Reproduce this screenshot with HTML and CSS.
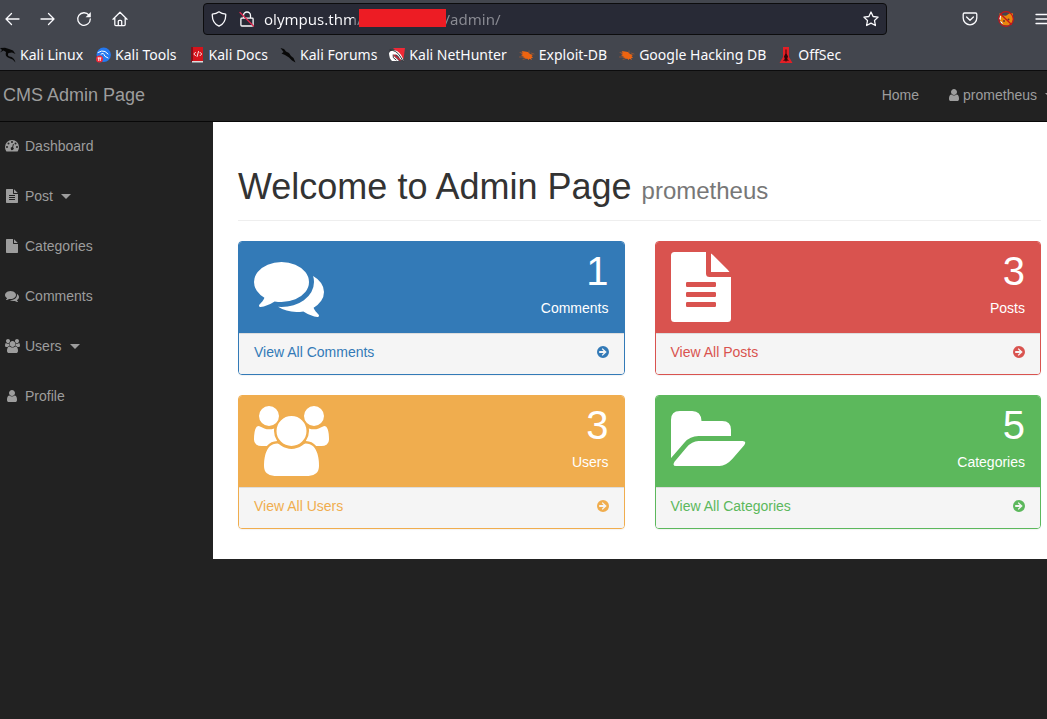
FILE: index.html
```html
<!DOCTYPE html>
<html lang="en">
<head>
<meta charset="utf-8">
<title>CMS Admin Page</title>
<meta name="viewport" content="width=device-width, initial-scale=1">
<link rel="stylesheet" href="styles.css">
</head>
<body>
<svg class="sprite" aria-hidden="true">
  <symbol id="i-comments" viewBox="0 0 1792 1792"><path d="M1408 768q0 139-94 257t-256.500 186.500-353.500 68.500q-86 0-176-16-124 88-278 128-36 9-86 16h-3q-11 0-20.500-8t-11.500-21q-1-3-1-6.500t.5-6.500 2-6l2.500-5 3.500-5.500 4-5 4.500-5 4-4.500q5-6 23-25t26-29.500 22.500-29 25-38.500 20.500-44q-124-72-195-177t-71-224q0-139 94-257t256.500-186.500 353.500-68.500 353.500 68.500 256.500 186.500 94 257zm384 256q0 120-71 224.500t-195 176.500q10 24 20.500 44t25 38.500 22.500 29 26 29.500 23 25q1 1 4 4.500t4.500 5 4 5 3.500 5.500l2.500 5 2 6 .5 6.500-1 6.500q-3 14-13 22t-22 7q-50-7-86-16-154-40-278-128-90 16-176 16-271 0-472-132 58 4 88 4 161 0 309-45t264-129q125-92 192-212t67-254q0-77-23-152 129 71 204 178t75 230z"/></symbol>
  <symbol id="i-users" viewBox="-64 0 1920 1792"><path d="M529 896q-162 5-265 128h-134q-82 0-138-40.500t-56-118.500q0-353 124-353 6 0 43.500 21t97.500 42.500 119 21.500q67 0 133-23-5 37-5 66 0 139 81 256zm1071 637q0 120-73 189.500t-194 69.500h-874q-121 0-194-69.500t-73-189.500q0-53 3.500-103.500t14-109 26.500-108.500 43-97.500 62-81 85.500-53.500 111.500-20q10 0 43 21.500t73 48 107 48 135 21.500 135-21.500 107-48 73-48 43-21.500q61 0 111.500 20t85.500 53.500 62 81 43 97.500 26.500 108.500 14 109 3.500 103.500zm-1024-1277q0 106-75 181t-181 75-181-75-75-181 75-181 181-75 181 75 75 181zm704 384q0 159-112.500 271.500t-271.500 112.500-271.500-112.500-112.500-271.500 112.500-271.500 271.500-112.500 271.500 112.500 112.500 271.500zm576 225q0 78-56 118.500t-138 40.500h-134q-103-123-265-128 81-117 81-256 0-29-5-66 66 23 133 23 59 0 119-21.500t97.500-42.500 43.500-21q124 0 124 353zm-128-609q0 106-75 181t-181 75-181-75-75-181 75-181 181-75 181 75 75 181z"/></symbol>
  <symbol id="i-user" viewBox="0 0 1280 1792"><path d="M1280 1399q0 109-62.500 187t-150.500 78h-854q-88 0-150.500-78t-62.500-187q0-85 8.500-160.500t31.500-152 58.500-131 94-89 134.500-34.500q131 128 313 128t313-128q76 0 134.500 34.500t94 89 58.500 131 31.500 152 8.500 160.500zm-256-887q0 159-112.500 271.500t-271.500 112.500-271.500-112.500-112.500-271.500 112.500-271.500 271.500-112.500 271.500 112.500 112.500 271.500z"/></symbol>
  <symbol id="i-file" viewBox="0 0 60 70"><path d="M3.500 0H35V21.500Q35 25 38.500 25H60V66.500Q60 70 56.500 70H3.500Q0 70 0 66.500V3.500Q0 0 3.500 0ZM40 1.500Q41.500 2.500 42.500 3.500L56.500 17.500Q58 19 58.500 20H40Z"/></symbol>
  <symbol id="i-file-text" viewBox="0 0 60 70"><path fill-rule="evenodd" d="M3.500 0H35V21.500Q35 25 38.500 25H60V66.500Q60 70 56.500 70H3.500Q0 70 0 66.500V3.500Q0 0 3.500 0ZM40 1.500Q41.500 2.500 42.500 3.500L56.500 17.500Q58 19 58.500 20H40ZM16.200 30H43.800Q45 30 45 31.200V33.800Q45 35 43.800 35H16.200Q15 35 15 33.800V31.200Q15 30 16.200 30ZM16.200 40H43.800Q45 40 45 41.200V43.800Q45 45 43.800 45H16.200Q15 45 15 43.800V41.200Q15 40 16.200 40ZM16.200 50H43.800Q45 50 45 51.200V53.800Q45 55 43.800 55H16.200Q15 55 15 53.800V51.200Q15 50 16.200 50Z"/></symbol>
  <symbol id="i-folder" viewBox="0 0 75 70"><path d="M0 52V13.800Q0 5 8.800 5H21.200Q30 5 30.500 15H51.200Q60 15 60 23.800V30H27.500Q19 30 13.500 36.500L.5 51.500ZM27.500 35H71.500Q76 35 73.200 39.200L61.500 52.800Q55 60 48.500 60H5Q1 60 3.500 55.800L15.500 41.500Q21 35 27.500 35Z"/></symbol>
  <symbol id="i-dash" viewBox="0 0 14 12"><path fill-rule="evenodd" d="M7 0A7 7 0 0 1 14 7Q14 9.200 12.900 11Q12.600 11.500 12.100 11.500H1.900Q1.400 11.500 1.100 11Q0 9.200 0 7A7 7 0 0 1 7 0ZM2 6A1 1 0 1 0 2 8A1 1 0 1 0 2 6ZM3.500 2.500A1 1 0 1 0 3.500 4.500A1 1 0 1 0 3.500 2.500ZM7 1A1 1 0 1 0 7 3A1 1 0 1 0 7 1ZM10.500 2.500A1 1 0 1 0 10.500 4.500A1 1 0 1 0 10.500 2.500ZM12 6A1 1 0 1 0 12 8A1 1 0 1 0 12 6ZM8 4L7.200 7A1.500 1.500 0 1 0 8.100 7.300L8.900 4.300Z"/></symbol>
  <symbol id="i-arrow" viewBox="0 0 12 12"><path fill-rule="evenodd" d="M6 0A6 6 0 1 1 6 12A6 6 0 1 1 6 0ZM5.600 2.200L4.700 3.100L6.600 5H2.200V7H6.600L4.700 8.900L5.600 9.800L9.700 6Z"/></symbol>
  <symbol id="i-bug" viewBox="0 0 16 16"><path fill="#ee6410" stroke="none" d="M3 4L6 4.500L9 5L11 7L14 8L12.500 9L14 11L12 11L13 13L10.500 11.800L9.500 13L8.500 11.800L6 12L6.500 11L3.500 10.500L5 10L2 8.500L4 8L1.500 6.500L3.500 6.500Z"/><path d="M1 5.500L4 5M.5 10L4 10M4 12.500L7 11.500M10 4L10 6M12 6L15 7" stroke="#a65a30" stroke-width=".7"/></symbol>
</svg>

<header class="browser">
  <div class="toolbar">
    <button class="tool" aria-label="Back"><svg class="ico16" viewBox="0 0 16 16"><path d="M15 8H2M7.500 2.500L2 8l5.500 5.500"/></svg></button>
    <button class="tool" aria-label="Forward"><svg class="ico16" viewBox="0 0 16 16"><path d="M1 8h13M8.500 2.500L14 8l-5.500 5.500"/></svg></button>
    <button class="tool" aria-label="Reload"><svg class="ico16" viewBox="0 0 16 16"><path d="M13 4.200A6.300 6.300 0 1 0 14.300 8"/><path class="solid" d="M14.800 1v5.200H9.600z"/></svg></button>
    <button class="tool" aria-label="Home"><svg class="ico16" viewBox="0 0 16 16"><path d="M1 8.200L8 1.300l7 6.900M2.800 7v6.600q0 1 1 1h8.400q1 0 1-1V7M6.300 14.500V10.300q0-1 1-1h1.400q1 0 1 1v4.200"/></svg></button>
    <div class="urlbar">
      <svg class="ico16" viewBox="0 0 16 16"><path d="M8 .8C10 2.400 12 3 14.700 3.200C15 9 12.500 13 8 15.200C3.500 13 1 9 1.300 3.200C4 3 6 2.400 8 .8Z"/></svg>
      <svg class="ico16" viewBox="0 0 16 16"><path d="M4.500 7V4.500a3.500 3.500 0 0 1 7 0V7M2.700 7.200h10.600q.8 0 .8.800v6q0 1-1 1H2.900q-1 0-1-1V8q0-.8.800-.8Z"/><path d="M1 1.500l13.500 13.500" stroke="#e22850"/></svg>
      <div class="address">
        <input class="url" type="text" aria-label="Address" value="olympus.thm/                     /admin/">
        <span class="redaction"></span>
      </div>
      <button class="star" aria-label="Bookmark this page"><svg class="ico16" viewBox="0 0 16 16"><path d="M8 1l2.100 4.500 5 .6-3.600 3.400.9 5L8 12.100l-4.400 2.400.9-5L.9 6.100l5-.6z"/></svg></button>
    </div>
    <div class="actions">
      <button class="tool" aria-label="Save to Pocket"><svg class="ico16" viewBox="0 0 16 16"><path d="M2.500 2h11q1.300 0 1.300 1.300V7a6.800 6.800 0 0 1-13.600 0V3.300Q1.200 2 2.500 2ZM4.600 6l3.400 3.300L11.400 6"/></svg></button>
      <button class="tool" aria-label="Proxy"><svg class="ico16" viewBox="0 0 16 16"><path d="M1.500 2L5 4.500L8 4.800L12 2L15 2.500L15 9Q14 13 10 14.500L5 14L2 10Z" fill="#e8860d" stroke="none"/><path d="M1 4L3 5L2.500 9L1 8ZM2 10L4 11L5 13.500L3 12Z" fill="#fff" stroke="none"/><circle cx="6" cy="10" r="1" fill="#633" stroke="none"/><circle cx="10.500" cy="8.500" r="1" fill="#633" stroke="none"/><circle cx="8" cy="8" r="7.300" stroke="#c4161c" stroke-width="1.200"/><path d="M2.500 3l10.800 10.300" stroke="#c4161c"/></svg></button>
      <button class="tool" aria-label="Menu"><svg class="ico16" viewBox="0 0 16 16"><path d="M2 3.500h14M2 8h14M2 12.500h14"/></svg></button>
    </div>
  </div>
  <nav class="bookmarks" aria-label="Bookmarks">
    <a href="#"><svg class="ico16" viewBox="0 0 16 16"><path d="M0 1L5 .8L9 2L13 3.500L15.500 7L12 5.500L8.500 6Q7 8.500 9.500 9.500Q14 10 15.500 15.500Q13 11.800 9 11Q4.500 9.500 6 5L3.500 3.500L0 5.500L2 3Z" fill="#080808" stroke="none"/></svg>Kali Linux</a>
    <a href="#"><svg class="ico16" viewBox="0 0 16 16"><circle cx="8.700" cy="7.800" r="7.200" fill="#2478f0" stroke="none"/><path d="M3 5.500Q7 3 10 4.500L13 7M6 7Q9 5.500 9 7.500T13 11" stroke="#fff" stroke-width="1"/><circle cx="4.500" cy="12" r="3.500" fill="#ee2a38" stroke="none"/><path d="M3 11h3M3.700 11v2.500M5.300 11v2.500" stroke="#fff" class="thin"/></svg>Kali Tools</a>
    <a href="#"><svg class="ico16" viewBox="0 0 16 16"><path d="M2 0h12v14H2z" fill="#d5141c" stroke="none"/><path d="M2 0h2v15H2z" fill="#851019" stroke="none"/><path d="M3 14h11v1.500H3z" fill="#ddd" stroke="none"/><path class="thin" d="M6.500 5.300L4.800 7l1.700 1.700M11 5.300L12.700 7 11 8.700M9.500 4.500l-1.400 5" stroke="#fff"/></svg>Kali Docs</a>
    <a href="#"><svg class="ico16" viewBox="0 0 16 16"><path d="M.5 1L4 2L6 4.500L9 6L11 9L13.500 11L15.500 15.500L12 13.500L9 10.500L5 8L1.500 6.500L3.500 5Z" fill="#080808" stroke="none"/></svg>Kali Forums</a>
    <a href="#"><svg class="ico16" viewBox="0 0 16 16"><path d="M4 1H16L14.500 12L8 5Z" fill="#f02936" stroke="none"/><path d="M0 6Q2 2 8 4Q13 7 14.500 14L11 12Q9 7 6 7.500Q4 9 7 11L10 14H3Q0 11 0 6Z" fill="#fff" stroke="none"/><path d="M5 8L11 13" stroke="#d92535"/><path class="thin" d="M1 3Q7 3 11 9L14 14M4 8Q3 11 7 13" stroke="#222"/></svg>Kali NetHunter</a>
    <a href="#"><svg class="ico16"><use href="#i-bug"/></svg>Exploit-DB</a>
    <a href="#"><svg class="ico16"><use href="#i-bug"/></svg>Google Hacking DB</a>
    <a href="#"><svg class="ico16" viewBox="0 0 16 16"><path d="M5 0h6v10l3.500 6h-13L5 10z" fill="#e31f26" stroke="none"/><path d="M7.500 2.500h1v4l1.500 3-.8 2.500 1.800 2-2.200-.5-.8 1.500-.8-1.500-2.200.5 1.800-2L6 9.500l1.500-3z" fill="#300608" stroke="none"/></svg>OffSec</a>
  </nav>
</header>

<nav class="navbar">
  <a class="brand" href="#">CMS Admin Page</a>
  <div class="topnav">
    <a href="#">Home</a>
    <a class="account" href="#"><svg class="fa w10"><use href="#i-user"/></svg>prometheus<span class="caret"></span></a>
  </div>
</nav>

<div class="wrapper">
  <nav class="sidebar" aria-label="Sections">
    <a href="#"><span class="fw"><svg class="fa w14 h12"><use href="#i-dash"/></svg></span>Dashboard</a>
    <a href="#"><span class="fw"><svg class="fa w12"><use href="#i-file-text"/></svg></span>Post<span class="caret"></span></a>
    <a href="#"><span class="fw"><svg class="fa w12"><use href="#i-file"/></svg></span>Categories</a>
    <a href="#"><span class="fw"><svg class="fa w14"><use href="#i-comments"/></svg></span>Comments</a>
    <a href="#"><span class="fw"><svg class="fa w15"><use href="#i-users"/></svg></span>Users<span class="caret"></span></a>
    <a href="#"><span class="fw"><svg class="fa w10"><use href="#i-user"/></svg></span>Profile</a>
  </nav>
  <main class="page">
    <h1>Welcome to Admin Page <small>prometheus</small></h1>
    <div class="panels">
      <section class="panel blue">
        <div class="heading"><svg class="big w70"><use href="#i-comments"/></svg><div class="stat"><div class="huge">1</div><div>Comments</div></div></div>
        <a class="footer" href="#">View All Comments<svg class="go"><use href="#i-arrow"/></svg></a>
      </section>
      <section class="panel red">
        <div class="heading"><svg class="big w60"><use href="#i-file-text"/></svg><div class="stat"><div class="huge">3</div><div>Posts</div></div></div>
        <a class="footer" href="#">View All Posts<svg class="go"><use href="#i-arrow"/></svg></a>
      </section>
      <section class="panel yellow">
        <div class="heading"><svg class="big w75"><use href="#i-users"/></svg><div class="stat"><div class="huge">3</div><div>Users</div></div></div>
        <a class="footer" href="#">View All Users<svg class="go"><use href="#i-arrow"/></svg></a>
      </section>
      <section class="panel green">
        <div class="heading"><svg class="big w75"><use href="#i-folder"/></svg><div class="stat"><div class="huge">5</div><div>Categories</div></div></div>
        <a class="footer" href="#">View All Categories<svg class="go"><use href="#i-arrow"/></svg></a>
      </section>
    </div>
  </main>
</div>
</body>
</html>
```

FILE: styles.css
```css
* { box-sizing: border-box; }
body {
  margin: 0;
  min-height: 100vh;
  overflow-x: hidden;
  background: #222;
  color: #333;
  font: 14px/20px "Liberation Sans", Helvetica, Arial, sans-serif;
}
a { color: inherit; text-decoration: none; }
button { padding: 0; border: 0; background: none; color: inherit; font: inherit; }
svg { display: block; flex: none; fill: currentColor; }
.sprite { position: absolute; width: 0; height: 0; }

/* Browser chrome */
.browser {
  height: 71px;
  overflow: hidden;
  border-bottom: 1px solid #0c0c0d;
  background: #43464e;
  color: #fbfbfe;
  font: 14px/20px "Noto Sans", sans-serif;
}
.ico16 {
  width: 16px;
  height: 16px;
  fill: none;
  stroke: currentColor;
  stroke-width: 1.3;
  stroke-linecap: round;
  stroke-linejoin: round;
}
.ico16 .solid { fill: currentColor; stroke: none; }
.ico16 .thin { stroke-width: .9; }
.toolbar { display: flex; align-items: center; height: 38px; padding-left: 4px; }
.tool { display: flex; flex: none; width: 36px; height: 32px; align-items: center; }
.urlbar {
  display: flex;
  flex: 1;
  align-items: center;
  gap: 12px;
  height: 32px;
  margin: 0 75px 0 55px;
  padding: 0 7px;
  border: 1px solid #0c0c0d;
  border-radius: 4px;
  background: #282a36;
}
.address { position: relative; flex: 1; margin-left: -3px; }
.url {
  display: block;
  width: 100%;
  height: 24px;
  padding: 0;
  border: 0;
  outline: 0;
  background: linear-gradient(90deg, #fbfbfe 90px, #8b8c94 90px);
  background-clip: text;
  -webkit-background-clip: text;
  color: transparent;
  font: 15px/24px "Noto Sans", sans-serif;
  white-space: pre;
}
.redaction { position: absolute; top: 2px; left: 95px; width: 87px; height: 18px; background: #ed1c24; }
.star { display: flex; }
.actions { display: flex; width: 85px; }
.bookmarks { display: flex; gap: 12px; align-items: center; height: 33px; white-space: nowrap; }
.bookmarks a { display: flex; gap: 4px; align-items: center; }

/* Top navigation */
.navbar {
  display: flex;
  justify-content: space-between;
  height: 51px;
  overflow: hidden;
  border-bottom: 1px solid #080808;
  color: #9d9d9d;
}
.brand { padding: 14px 3px; font-size: 18px; }
.topnav { display: flex; gap: 30px; align-items: flex-start; margin-right: -6px; padding: 14px 0; }
.account { display: flex; gap: 4px; align-items: center; }
.caret {
  margin-left: 4px;
  border-top: 4px solid;
  border-right: 4px solid transparent;
  border-left: 4px solid transparent;
}
.fa { width: 14px; height: 14px; }
.w10 { width: 10px; }
.w12 { width: 12px; }
.w14 { width: 14px; }
.w15 { width: 15px; }
.h12 { height: 12px; }

/* Layout */
.wrapper { display: grid; grid-template-columns: 213px 1fr; align-items: start; }
.sidebar { color: #9d9d9d; }
.sidebar a { display: flex; gap: 4px; align-items: center; padding: 14px 3px 16px; }
.sidebar .caret { border-width: 5px 5px 0; }
.fw { display: flex; justify-content: center; width: 18px; }
.page { padding: 45px 6px 30px 25px; background: #fff; }
h1 {
  margin: 0 0 20px;
  padding-bottom: 9px;
  border-bottom: 1px solid #eee;
  font-size: 36px;
  font-weight: 400;
  line-height: 40px;
}
h1 small { color: #777; font-size: 24px; }

/* Panels */
.panels { display: grid; grid-template-columns: 1fr 1fr; gap: 20px 30px; }
.panel { overflow: hidden; border: 1px solid var(--tone); border-radius: 4px; box-shadow: 0 1px 1px rgba(0, 0, 0, .05); }
.blue { --tone: #337ab7; }
.red { --tone: #d9534f; }
.yellow { --tone: #f0ad4e; }
.green { --tone: #5cb85c; }
.heading { display: flex; justify-content: space-between; padding: 10px 15px 11px; background: var(--tone); color: #fff; }
.big { width: 70px; height: 70px; }
.w60 { width: 60px; }
.w75 { width: 75px; }
.stat { text-align: right; }
.huge { margin-bottom: 8px; font-size: 40px; line-height: 38px; }
.footer {
  display: flex;
  justify-content: space-between;
  padding: 8px 15px 12px;
  border-top: 1px solid #ddd;
  background: #f5f5f5;
  color: var(--tone);
}
.go { width: 12px; height: 12px; margin-top: 4px; }
```
